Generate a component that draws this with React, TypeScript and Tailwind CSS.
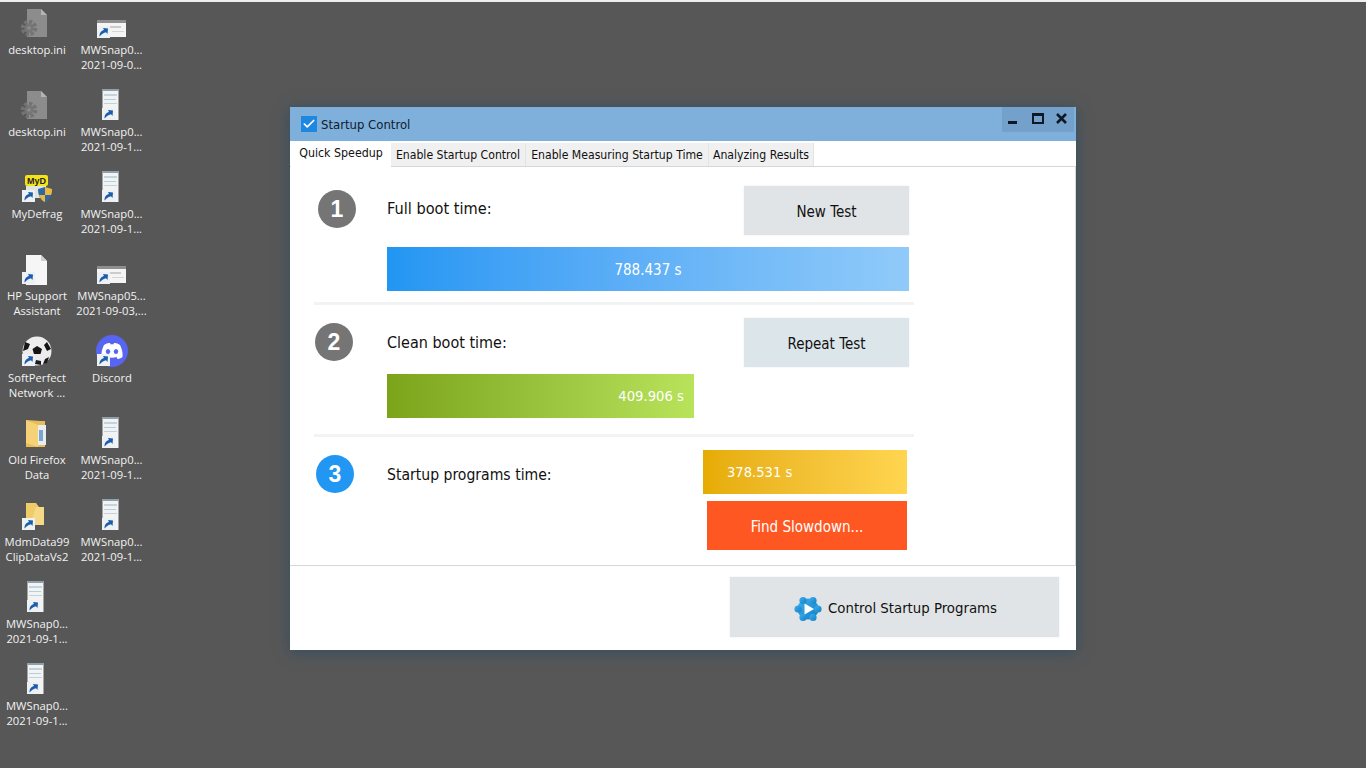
import React from 'react';
import { Check } from 'lucide-react';

type IconKind = 'ini' | 'wide' | 'doc' | 'mydefrag' | 'blank' | 'ball' | 'discord' | 'folder' | 'folderBlank';

interface DesktopItem {
  x: number;
  y: number;
  kind: IconKind;
  lines: string[];
  shortcut?: boolean;
}

const DESKTOP_ITEMS: DesktopItem[] = [
  { x: 0, y: 7, kind: 'ini', lines: ['desktop.ini'] },
  { x: 74.5, y: 7, kind: 'wide', lines: ['MWSnap0...', '2021-09-0...'], shortcut: true },
  { x: 0, y: 89, kind: 'ini', lines: ['desktop.ini'] },
  { x: 74.5, y: 89, kind: 'doc', lines: ['MWSnap0...', '2021-09-1...'], shortcut: true },
  { x: 0, y: 171, kind: 'mydefrag', lines: ['MyDefrag'], shortcut: true },
  { x: 74.5, y: 171, kind: 'doc', lines: ['MWSnap0...', '2021-09-1...'], shortcut: true },
  { x: 0, y: 253, kind: 'blank', lines: ['HP Support', 'Assistant'], shortcut: true },
  { x: 74.5, y: 253, kind: 'wide', lines: ['MWSnap05...', '2021-09-03,...'], shortcut: true },
  { x: 0, y: 335, kind: 'ball', lines: ['SoftPerfect', 'Network ...'], shortcut: true },
  { x: 75, y: 335, kind: 'discord', lines: ['Discord'], shortcut: true },
  { x: 0, y: 417, kind: 'folder', lines: ['Old Firefox', 'Data'] },
  { x: 74.5, y: 417, kind: 'doc', lines: ['MWSnap0...', '2021-09-1...'], shortcut: true },
  { x: 0, y: 499, kind: 'folderBlank', lines: ['MdmData99', 'ClipDataVs2'], shortcut: true },
  { x: 74.5, y: 499, kind: 'doc', lines: ['MWSnap0...', '2021-09-1...'], shortcut: true },
  { x: 0, y: 581, kind: 'doc', lines: ['MWSnap0...', '2021-09-1...'], shortcut: true },
  { x: 0, y: 663, kind: 'doc', lines: ['MWSnap0...', '2021-09-1...'], shortcut: true },
];

const ShortcutBadge = ({ x }: { x: number }) => (
  <g transform={`translate(${x} 19)`}>
    <rect width="13" height="12" fill="#eef1f3" />
    <path d="M2.5 10.5 C2.5 6.5 4.5 4.5 7 4 L6 2 L11 2.5 L10.5 8 L9 6.3 C7 6.8 5 8 2.5 10.5 Z" fill="#1b5cab" />
  </g>
);

const FileIcon = ({ kind, shortcut }: { kind: IconKind; shortcut?: boolean }) => (
  <svg width="36" height="36" viewBox="0 0 36 36">
    {kind === 'ini' && (
      <g>
        <path d="M8 2 H22 L28 8 V30 H8 Z" fill="#8c8c8c" />
        <path d="M22 2 L28 8 H22 Z" fill="#b4b4b4" />
        <circle cx="10" cy="21" r="6" fill="none" stroke="#737373" strokeWidth="4.5" strokeDasharray="3 1.6" />
        <circle cx="10" cy="21" r="4.5" fill="#767676" />
        <circle cx="10" cy="21" r="1.8" fill="#8c8c8c" />
      </g>
    )}
    {kind === 'wide' && (
      <g>
        <rect x="3" y="13" width="29" height="17" fill="#f5f5f5" />
        <rect x="3" y="13" width="29" height="3" fill="#8f8f8f" />
        <rect x="5" y="19" width="22" height="2" fill="#cccccc" />
        <rect x="18" y="24" width="12" height="1" fill="#d5d5d5" />
      </g>
    )}
    {kind === 'doc' && (
      <g>
        <rect x="8.5" y="0" width="16" height="31" fill="#f1f3f4" />
        <rect x="8.5" y="0" width="16" height="2" fill="#8fa0ab" />
        <rect x="10" y="5" width="13" height="2" fill="#c5d3da" />
        <rect x="10" y="10" width="12" height="1" fill="#b4d0d8" />
        <rect x="10" y="14" width="13" height="1" fill="#c6d2d8" />
      </g>
    )}
    {kind === 'blank' && (
      <g>
        <path d="M7 2 H22 L28 8 V32 H7 Z" fill="#f6f6f6" />
        <path d="M22 2 L28 8 H22 Z" fill="#cfcfcf" />
      </g>
    )}
    {kind === 'mydefrag' && (
      <g>
        <rect x="6" y="4" width="23" height="11" rx="2" fill="#f5e21a" />
        <text x="17.5" y="13" textAnchor="middle" fontSize="9" fontWeight="700" fill="#222" fontFamily="Liberation Sans, sans-serif">MyD</text>
        <rect x="7" y="15" width="20" height="12" fill="#dfe6df" />
        <path d="M19 18 L26 16 L33 18 C33 25 30 29 26 31 C22 29 19 25 19 18 Z" fill="#2f68a8" />
        <path d="M26 16 L33 18 C33 20 33 22 32 24 H26 Z" fill="#edb93c" />
        <path d="M26 24 H20 C21 27 23 30 26 31 Z" fill="#edb93c" />
      </g>
    )}
    {kind === 'ball' && (
      <g>
        <circle cx="18" cy="16" r="14.5" fill="#ececec" />
        <path d="M18 11 L23 14 L21.5 19 H15 L13.5 14 Z" fill="#151515" />
        <path d="M6 7 L11 9 L9 14 L4 16 Z" fill="#151515" />
        <path d="M28 7 L32 14 L28 16 L25 10 Z" fill="#151515" />
        <path d="M17 25 L22 26 L22 30 L16 29 Z" fill="#1c1c1c" />
        <path d="M26 24 L30 22 L28 28 L24 29 Z" fill="#1c1c1c" />
      </g>
    )}
    {kind === 'discord' && (
      <g transform="translate(1 0)">
        <circle cx="17" cy="16" r="16" fill="#5865f2" />
        <path d="M9 10 C12 8 14 8 15 8 L15.5 9.5 C16.5 9.3 17.5 9.3 18.5 9.5 L19 8 C20 8 22 8 25 10 C27 14 28 18 27.5 22 C25.5 23.5 23.5 24 22.5 24 L21.5 22 C19 23 15 23 12.5 22 L11.5 24 C10.5 24 8.5 23.5 6.5 22 C6 18 7 14 9 10 Z" fill="#ffffff" />
        <ellipse cx="13" cy="16.5" rx="2.2" ry="2.6" fill="#5865f2" />
        <ellipse cx="21" cy="16.5" rx="2.2" ry="2.6" fill="#5865f2" />
      </g>
    )}
    {kind === 'folder' && (
      <g>
        <path d="M7 3 L22 4 H26 V30 H7 Z" fill="#e8bd55" />
        <rect x="19" y="8" width="8" height="20" fill="#e9edf2" />
        <rect x="20" y="13" width="4" height="11" fill="#7ba7cf" />
        <path d="M7 3 L19 8 V30 L7 26 Z" fill="#f5d277" />
      </g>
    )}
    {kind === 'folderBlank' && (
      <g>
        <path d="M7 4 H17 L20 8 H25 V26 H7 Z" fill="#f0cc69" />
        <path d="M17 8 H25 V26 H11 Z" fill="#f6d987" />
      </g>
    )}
    {shortcut && <ShortcutBadge x={kind === 'doc' ? 8 : 3} />}
  </svg>
);

const DesktopIcon = ({ item }: { item: DesktopItem }) => (
  <div
    className="absolute flex w-[74px] flex-col items-center font-['Open_Sans','Noto_Sans',sans-serif] text-[11.25px] leading-[15px] text-[#f2f2f2]"
    style={{ left: item.x, top: item.y }}
  >
    <div className="h-[34px]">
      <FileIcon kind={item.kind} shortcut={item.shortcut} />
    </div>
    <div className="mt-[1px] text-center whitespace-nowrap">
      {item.lines.map((line) => (
        <div key={line}>{line}</div>
      ))}
    </div>
  </div>
);

const StepCircle = ({ n, blue }: { n: number; blue?: boolean }) => (
  <div
    className={`flex h-[38px] w-[38px] items-center justify-center rounded-full font-['Liberation_Sans',sans-serif] text-[23px] font-bold text-white ${
      blue ? 'bg-[#2196f3]' : 'bg-[#757575]'
    }`}
  >
    {n}
  </div>
);

const Gear = () => (
  <svg width="28" height="28" viewBox="0 0 28 28" className="shrink-0">
    <defs>
      <linearGradient id="gearFill" x1="0" y1="0" x2="1" y2="1">
        <stop offset="0" stopColor="#3fb0ee" />
        <stop offset="1" stopColor="#117fc6" />
      </linearGradient>
    </defs>
    <g fill="url(#gearFill)">
      <circle cx="14" cy="14" r="10.5" />
      <circle cx="9" cy="5.5" r="3.6" />
      <circle cx="19" cy="5.5" r="3.6" />
      <circle cx="24" cy="14" r="3.6" />
      <circle cx="19" cy="22.5" r="3.6" />
      <circle cx="9" cy="22.5" r="3.6" />
      <circle cx="4" cy="14" r="3.6" />
    </g>
    <path d="M10.5 8.5 L20 14 L10.5 19.5 Z" fill="#ffffff" />
  </svg>
);

const TABS = [
  { label: 'Enable Startup Control', w: 'w-[135px]' },
  { label: 'Enable Measuring Startup Time', w: 'w-[183px]' },
  { label: 'Analyzing Results', w: 'w-[105px]' },
];

const BTN = 'flex items-center justify-center pt-[3px] text-[#111] shadow-[0_0_2px_rgba(0,0,0,0.08)]';

export default function App() {
  return (
    <div className="relative h-[768px] w-[1366px] overflow-hidden bg-[#575757]">
      <div className="h-[2px] w-full bg-[#efefef]" />

      {DESKTOP_ITEMS.map((item) => (
        <DesktopIcon key={`${item.x}-${item.y}`} item={item} />
      ))}

      {/* app window */}
      <div className="absolute top-[107px] left-[290px] flex h-[543px] w-[786px] flex-col bg-white font-['DejaVu_Sans_Condensed','DejaVu_Sans',sans-serif] text-[#111] shadow-[0_2px_14px_rgba(40,75,100,0.75)]">
        <div className="relative flex h-[34px] shrink-0 items-center bg-[#7fafdb] pl-[11px]">
          <div className="flex h-[16px] w-[16px] items-center justify-center bg-[#1e88e0]">
            <Check size={14} strokeWidth={3} className="text-white" />
          </div>
          <span className="ml-[4px] pt-[1px] text-[13px] text-[#10202e]">Startup Control</span>
          <div className="absolute top-0 right-[2px] flex h-[25px] w-[72px] items-start bg-[#74a1cc]">
            <div className="mt-[14px] ml-[6px] h-[3px] w-[9px] bg-[#0d1a26]" />
            <div className="mt-[6px] ml-[15px] h-[11px] w-[12px] border-2 border-t-[3px] border-[#0d1a26]" />
            <svg className="mt-[6px] ml-[12px]" width="11" height="11" viewBox="0 0 11 11">
              <path d="M1 1 L10 10 M10 1 L1 10" stroke="#0d1a26" strokeWidth="2.6" />
            </svg>
          </div>
        </div>

        <div className="flex h-[26px] shrink-0 border-b border-[#d5d8da] pl-[1px]">
          <div className="z-10 flex h-[26px] w-[100px] items-start justify-center bg-white pt-[5px] text-[12.3px] leading-[15px]">Quick Speedup</div>
          {TABS.map((tab) => (
            <div
              key={tab.label}
              className={`mt-[2px] flex h-[23px] items-center justify-center border-r border-[#e4e4e4] bg-[#f0f0f0] pt-[2px] text-[12.15px] ${tab.w}`}
            >
              {tab.label}
            </div>
          ))}
        </div>

        <div className="flex h-[399px] shrink-0 flex-col border-r border-b border-[#d5d8da]">
          <section className="mx-[24px] h-[138px] w-[600px] shrink-0 border-b-[3px] border-[#f2f3f3] pt-[19px] pl-[73px]">
            <div className="flex h-[49px] items-center justify-between pr-[5px]">
              <span className="pb-[2px] text-[16.2px]">Full boot time:</span>
              <button className={`${BTN} h-[49px] w-[165px] bg-[#e0e4e6] text-[15px]`}>New Test</button>
            </div>
            <div className="mt-[12px] flex h-[44px] w-[522px] items-center justify-center bg-gradient-to-r from-[#2196f3] to-[#90caf9] pt-[2px] text-[15px] text-white">
              788.437 s
            </div>
          </section>
          <section className="mx-[24px] h-[132px] w-[600px] shrink-0 border-b-[3px] border-[#f2f3f3] pt-[13px] pl-[73px]">
            <div className="flex h-[49px] items-center justify-between pr-[5px]">
              <span className="pt-[1px] text-[16px]">Clean boot time:</span>
              <button className={`${BTN} h-[49px] w-[165px] bg-[#dce6ea] text-[15px]`}>Repeat Test</button>
            </div>
            <div className="mt-[7px] flex h-[44px] w-[307px] items-center justify-end bg-gradient-to-r from-[#7ca41a] to-[#b8e35a] pt-[1px] pr-[10px] text-[14.7px] text-white">
              409.906 s
            </div>
          </section>
          <section className="mx-[24px] flex w-[600px] justify-between pt-[13px] pl-[73px]">
            <span className="mt-[14px] text-[15.6px]">Startup programs time:</span>
            <div className="mr-[7px] flex w-[204px] flex-col items-end">
              <div className="flex h-[44px] w-[204px] items-center bg-gradient-to-r from-[#e6ac00] to-[#ffd54f] pl-[24px] text-[14.6px] text-white">
                378.531 s
              </div>
              <button className="mt-[7px] flex h-[49px] w-[200px] items-center justify-center bg-[#ff5722] pt-[3px] text-[15px] text-white">
                Find Slowdown...
              </button>
            </div>
          </section>
        </div>

        <div className="flex flex-1 items-start justify-end pt-[11px] pr-[17px]">
          <button className={`${BTN} h-[60px] w-[329px] justify-start gap-[6px] bg-[#e0e4e6] pl-[64px] text-[14.8px]`}>
            <Gear />
            <span>Control Startup Programs</span>
          </button>
        </div>
      </div>

      {/* step badges sit on top of their rows */}
      <div className="absolute top-[190px] left-[318px]"><StepCircle n={1} /></div>
      <div className="absolute top-[323px] left-[315px]"><StepCircle n={2} /></div>
      <div className="absolute top-[455px] left-[316px]"><StepCircle n={3} blue /></div>
    </div>
  );
}
